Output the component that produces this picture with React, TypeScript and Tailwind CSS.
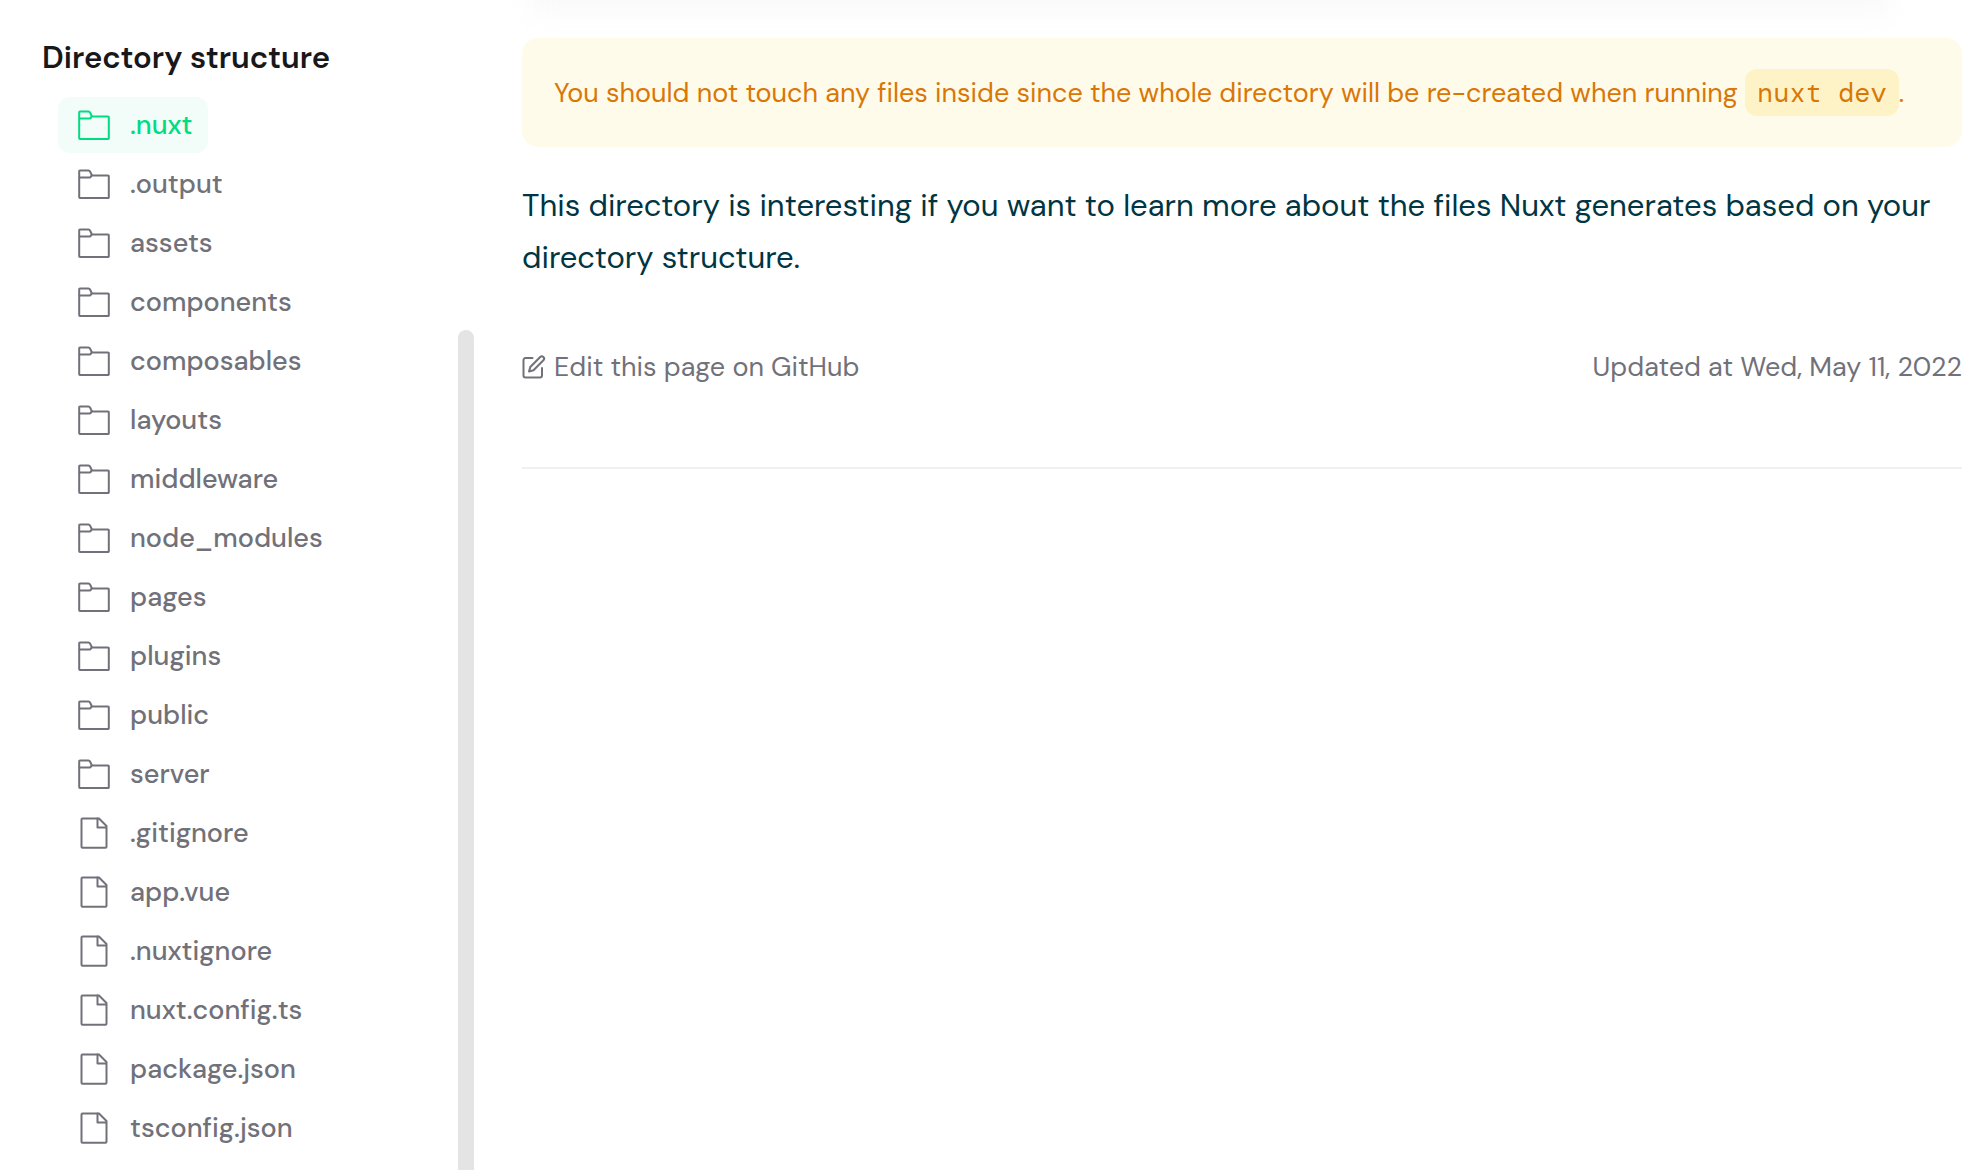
type Entry = { name: string; kind: "folder" | "file"; active?: boolean };

const entries: Entry[] = [
  { name: ".nuxt", kind: "folder", active: true },
  { name: ".output", kind: "folder" },
  { name: "assets", kind: "folder" },
  { name: "components", kind: "folder" },
  { name: "composables", kind: "folder" },
  { name: "layouts", kind: "folder" },
  { name: "middleware", kind: "folder" },
  { name: "node_modules", kind: "folder" },
  { name: "pages", kind: "folder" },
  { name: "plugins", kind: "folder" },
  { name: "public", kind: "folder" },
  { name: "server", kind: "folder" },
  { name: ".gitignore", kind: "file" },
  { name: "app.vue", kind: "file" },
  { name: ".nuxtignore", kind: "file" },
  { name: "nuxt.config.ts", kind: "file" },
  { name: "package.json", kind: "file" },
  { name: "tsconfig.json", kind: "file" },
];

function FolderIcon() {
  return (
    <svg className="size-8 shrink-0" viewBox="0 0 32 32" fill="none" stroke="currentColor" strokeWidth="2" strokeLinejoin="round" strokeLinecap="round" aria-hidden="true">
      <path d="M2 2.500h8.500q1 0 1.500 1L14 7.500H30a.8.8 0 0 1 .8.800V29.200a.8.8 0 0 1-.8.800H2a.8.8 0 0 1-.8-.8V3.300A.8.8 0 0 1 2 2.500Z" />
      <path d="M1.500 9.500H11.500q1 0 1.500-1l.5-1" />
    </svg>
  );
}

function FileIcon() {
  return (
    <svg className="size-8 shrink-0" viewBox="0 0 32 32" fill="none" stroke="currentColor" strokeWidth="2" strokeLinejoin="round" strokeLinecap="round" aria-hidden="true">
      <path d="M4.500 1.500H21l7.500 7.500v20.800a1 1 0 0 1-1 1h-23a1 1 0 0 1-1-1V2.500a1 1 0 0 1 1-1Z" />
      <path d="M19.500 1.500v9h8.500" />
    </svg>
  );
}

function EditIcon() {
  return (
    <svg className="size-6 shrink-0" viewBox="0 0 24 24" fill="none" stroke="currentColor" strokeWidth="2" strokeLinejoin="round" strokeLinecap="round" aria-hidden="true">
      <path d="M10.500 3H3.500A2 2 0 0 0 1.500 5v15.500a2 2 0 0 0 2 2H18a2 2 0 0 0 2-2V13" />
      <path d="M18.200 2a2.200 2.200 0 0 1 3.200 3.200L11.500 15.200l-4.500 1.300 1.300-4.500L18.200 2Z" />
    </svg>
  );
}

export default function App() {
  return (
    <div className="flex h-screen overflow-hidden bg-white font-['DM_Sans','Inter',sans-serif] text-[27px] [font-variant-ligatures:none]">
      <aside className="flex w-[474px] shrink-0">
        <nav aria-label="Directory structure" className="min-w-0 flex-1 overflow-hidden pt-9 pl-[42px]">
          <h2 className="text-[31px] leading-[44px] font-semibold text-[#18181b]">Directory structure</h2>
          <ul className="mt-[17px] flex flex-col gap-[3px] pl-4">
            {entries.map((entry) => (
              <li key={entry.name} className="flex">
                <a
                  href="#"
                  aria-current={entry.active ? "page" : undefined}
                  className={
                    entry.active
                      ? "flex h-14 items-center gap-5 rounded-xl bg-[#f2fdf9] px-5 pr-4 font-medium text-[#00dc82]"
                      : "flex h-14 items-center gap-5 rounded-xl px-5 pr-4 font-medium text-[#71717a]"
                  }
                >
                  {entry.kind === "folder" ? <FolderIcon /> : <FileIcon />}
                  {entry.name}
                </a>
              </li>
            ))}
          </ul>
        </nav>
        <div className="mt-[330px] w-4 shrink-0 rounded-t-full bg-[#e4e4e5]" />
      </aside>

      <main className="relative min-w-0 flex-1 pt-[38px] pr-[26px] pl-12">
        <div className="absolute -top-6 right-24 left-14 h-9 bg-[#f9f9f9] blur-md" />
        <div className="relative rounded-2xl bg-[#fffbeb] p-8 leading-[45px] text-[#d97706]">
          You should not touch any files inside since the whole directory will be re-created when running{" "}
          <code className="rounded-xl bg-[#fef3c7] px-3 py-1.5 font-['DM_Mono','DejaVu_Sans_Mono',monospace] text-[27px] leading-8">
            nuxt dev
          </code>
          .
        </div>
        <p className="mt-[33px] text-[31px] leading-[52px] text-[#003543]">
          This directory is interesting if you want to learn more about the files Nuxt generates based on your
          directory structure.
        </p>
        <footer className="mt-[62px] flex items-center justify-between border-b-2 border-[#f0f0f1] pb-[79px] leading-[42px] text-[#71717a]">
          <a href="#" className="flex items-center gap-2">
            <EditIcon />
            Edit this page on GitHub
          </a>
          <span>Updated at Wed, May 11, 2022</span>
        </footer>
      </main>
    </div>
  );
}
